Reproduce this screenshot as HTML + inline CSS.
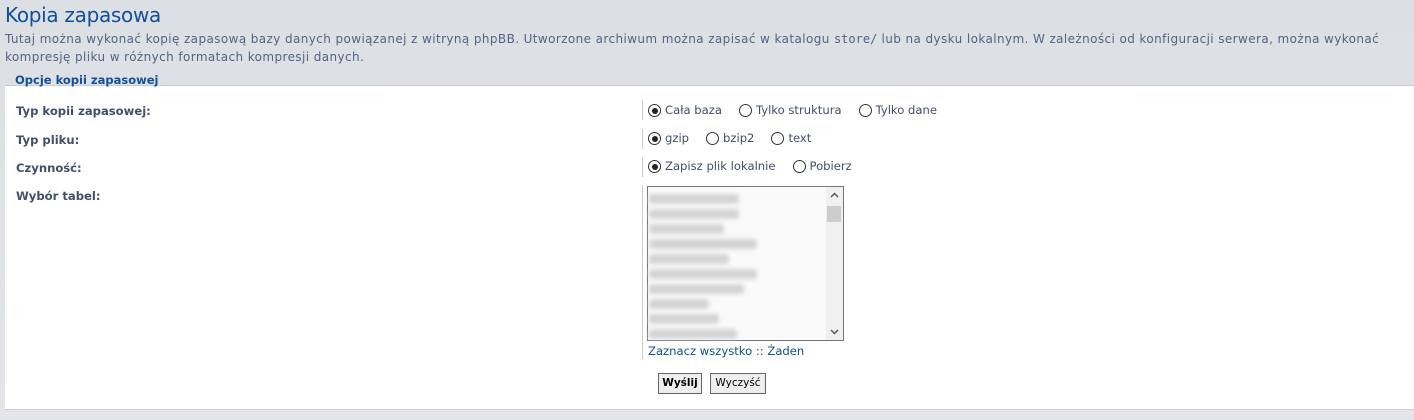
<!DOCTYPE html><html><head><meta charset="utf-8"><style>
body{margin:0;width:1414px;height:420px;background:linear-gradient(#dcdfe4,#e3e5e8);font-family:"DejaVu Sans","Liberation Sans",sans-serif;color:#536482;position:relative;overflow:hidden}
h1{position:absolute;left:5px;top:3px;margin:0;font-weight:normal;font-size:20px;color:#115098;font-family:"DejaVu Sans",sans-serif;letter-spacing:-0.3px}
.desc{position:absolute;left:5px;top:30px;font-size:12px;line-height:18px;color:#536482;letter-spacing:0.4px;white-space:nowrap}
.desc code{font-family:"DejaVu Sans Mono",monospace;font-size:12px;letter-spacing:0}
.panel{position:absolute;left:5px;top:85px;width:1409px;height:323px;background:#fff;border-top:1px solid #ccc;border-bottom:1px solid #ccc}
.leg{position:absolute;left:15px;top:73px;font-size:11.5px;font-weight:bold;color:#115098}
.lab{position:absolute;left:16px;font-size:11.6px;font-weight:bold;color:#425067}
.vl{position:absolute;left:642px;width:1px;background:#ccc}
.opt{position:absolute;left:648px;font-size:11.6px;color:#425067;white-space:nowrap}
.r{display:inline-block;width:13px;height:13px;border:1px solid #333;border-radius:50%;vertical-align:-3px;margin-right:4px;position:relative;box-sizing:border-box}
.r.on:after{content:"";position:absolute;left:2.5px;top:2.5px;width:6px;height:6px;border-radius:50%;background:#222}
.sp{display:inline-block;width:17px}
.list{position:absolute;left:647px;top:186px;width:197px;height:155px;border:1px solid #767676;box-sizing:border-box;background:#fafafa}
.sb{position:absolute;right:0;top:0;width:17px;height:153px;background:#f0f0f0}
.bar{position:absolute;left:1px;height:10px;background:#d4d4d4;filter:blur(2px);border-radius:3px}
.btn{position:absolute;top:373px;height:21px;border:1px solid #666;background:#eee;font-size:10.5px;color:#000;box-sizing:border-box;text-align:center;line-height:19px}
a{color:#105289;text-decoration:none}
</style></head><body>
<h1>Kopia zapasowa</h1>
<div class="desc">Tutaj można wykonać kopię zapasową bazy danych powiązanej z witryną phpBB. Utworzone archiwum można zapisać w katalogu <code>store/</code> lub na dysku lokalnym. W zależności od konfiguracji serwera, można wykonać<br>kompresję pliku w różnych formatach kompresji danych.</div>
<div class="panel"></div>
<div class="leg">Opcje kopii zapasowej</div>
<div class="lab" style="top:104px">Typ kopii zapasowej:</div>
<div class="lab" style="top:133px">Typ pliku:</div>
<div class="lab" style="top:161px">Czynność:</div>
<div class="lab" style="top:189px">Wybór tabel:</div>
<div class="vl" style="top:100px;height:20px"></div>
<div class="vl" style="top:129px;height:20px"></div>
<div class="vl" style="top:157px;height:20px"></div>
<div class="vl" style="top:185px;height:174px"></div>
<div class="opt" style="top:103px"><span class="r on"></span>Cała baza<span class="sp"></span><span class="r"></span>Tylko struktura<span class="sp"></span><span class="r"></span>Tylko dane</div>
<div class="opt" style="top:131px"><span class="r on"></span>gzip<span class="sp"></span><span class="r"></span>bzip2<span class="sp"></span><span class="r"></span>text</div>
<div class="opt" style="top:159px"><span class="r on"></span>Zapisz plik lokalnie<span class="sp"></span><span class="r"></span>Pobierz</div>
<div class="list">
<div class="bar" style="top:7px;width:90px"></div><div class="bar" style="top:22px;width:90px"></div><div class="bar" style="top:37px;width:75px"></div><div class="bar" style="top:52px;width:108px"></div><div class="bar" style="top:67px;width:80px"></div><div class="bar" style="top:82px;width:108px"></div><div class="bar" style="top:97px;width:95px"></div><div class="bar" style="top:112px;width:60px"></div><div class="bar" style="top:127px;width:70px"></div><div class="bar" style="top:142px;width:88px"></div>
<div class="sb"><div style="position:absolute;left:1px;top:19px;width:14px;height:16px;background:#cdcdcd"></div>
<svg style="position:absolute;left:4px;top:5px" width="9" height="6"><path d="M1 5L4.5 1.5L8 5" stroke="#555" stroke-width="1.5" fill="none"/></svg>
<svg style="position:absolute;left:4px;bottom:5px" width="9" height="6"><path d="M1 1L4.5 4.5L8 1" stroke="#555" stroke-width="1.5" fill="none"/></svg></div>
</div>
<div class="opt" style="top:344px"><a>Zaznacz wszystko</a> :: <a>Żaden</a></div>
<div class="btn" style="left:658px;width:44px;font-weight:bold">Wyślij</div>
<div class="btn" style="left:710px;width:56px">Wyczyść</div>
</body></html>
